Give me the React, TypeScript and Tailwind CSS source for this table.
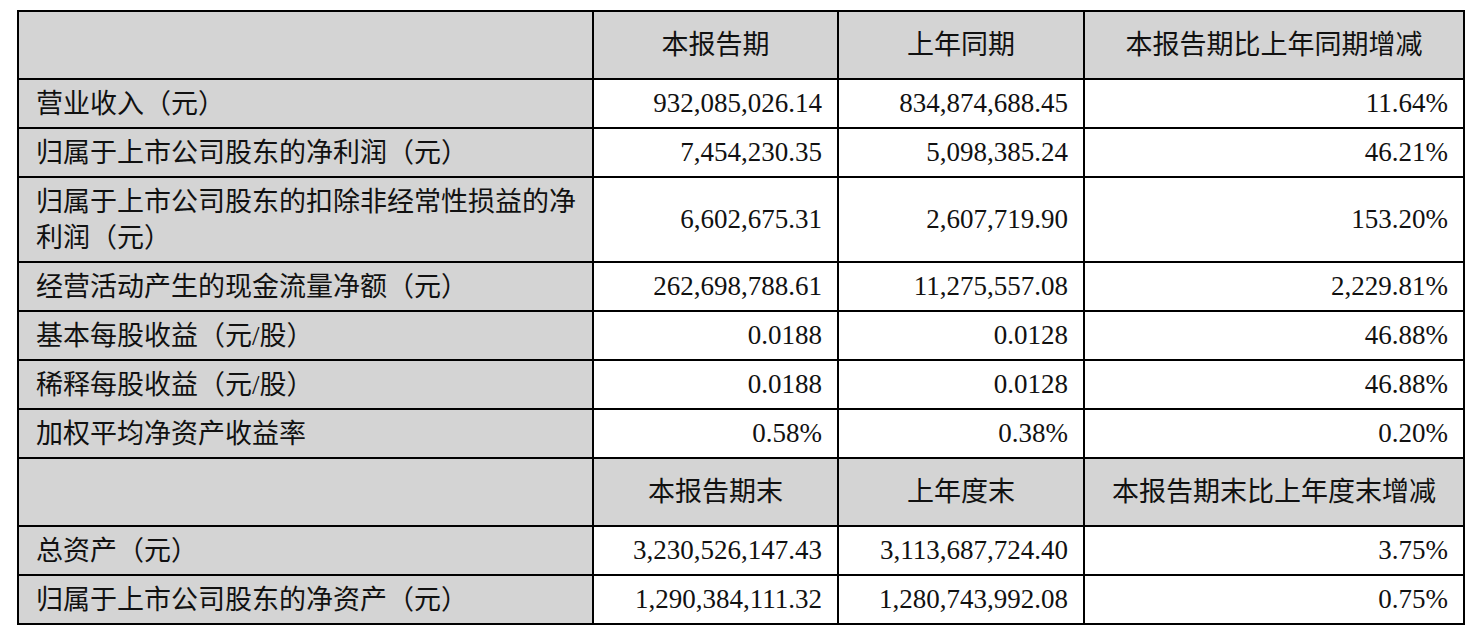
const rows1 = [
  { label: '营业收入（元）', a: '932,085,026.14', b: '834,874,688.45', c: '11.64%' },
  { label: '归属于上市公司股东的净利润（元）', a: '7,454,230.35', b: '5,098,385.24', c: '46.21%' },
  {
    label: '归属于上市公司股东的扣除非经常性损益的净利润（元）',
    a: '6,602,675.31',
    b: '2,607,719.90',
    c: '153.20%',
    tall: true,
  },
  { label: '经营活动产生的现金流量净额（元）', a: '262,698,788.61', b: '11,275,557.08', c: '2,229.81%' },
  { label: '基本每股收益（元/股）', a: '0.0188', b: '0.0128', c: '46.88%' },
  { label: '稀释每股收益（元/股）', a: '0.0188', b: '0.0128', c: '46.88%' },
  { label: '加权平均净资产收益率', a: '0.58%', b: '0.38%', c: '0.20%' },
]

const rows2 = [
  { label: '总资产（元）', a: '3,230,526,147.43', b: '3,113,687,724.40', c: '3.75%' },
  { label: '归属于上市公司股东的净资产（元）', a: '1,290,384,111.32', b: '1,280,743,992.08', c: '0.75%' },
]

function HeaderRow({ cols }: { cols: string[] }) {
  return (
    <tr className="h-[68px] bg-[#d4d4d4]">
      <td className="border-2 border-black"></td>
      {cols.map((c) => (
        <td key={c} className="border-2 border-black text-center align-middle">
          {c}
        </td>
      ))}
    </tr>
  )
}

function DataRow({ row }: { row: { label: string; a: string; b: string; c: string; tall?: boolean } }) {
  return (
    <tr className={row.tall ? 'h-[85px]' : 'h-[49px]'}>
      <td className="border-2 border-black bg-[#d4d4d4] pl-[17px] pr-2 align-middle leading-[36px]">
        {row.tall ? (
          <>
            归属于上市公司股东的扣除非经常性损益的净
            <br />
            利润（元）
          </>
        ) : (
          row.label
        )}
      </td>
      <td className="border-2 border-black pr-[15px] text-right align-middle">{row.a}</td>
      <td className="border-2 border-black pr-[15px] text-right align-middle">{row.b}</td>
      <td className="border-2 border-black pr-[15px] text-right align-middle">{row.c}</td>
    </tr>
  )
}

export default function App() {
  return (
    <div className="min-h-screen bg-white pt-[10px] pl-[17px]">
      <table
        className="table-fixed border-collapse text-[27px] text-[#111] font-['Liberation_Serif','Noto_Sans_CJK_SC',serif] leading-none"
        style={{ width: 1446 }}
      >
        <colgroup>
          <col className="w-[575px]" />
          <col className="w-[245px]" />
          <col className="w-[246px]" />
          <col className="w-[380px]" />
        </colgroup>
        <tbody>
          <HeaderRow cols={['本报告期', '上年同期', '本报告期比上年同期增减']} />
          {rows1.map((r) => (
            <DataRow key={r.label} row={r} />
          ))}
          <HeaderRow cols={['本报告期末', '上年度末', '本报告期末比上年度末增减']} />
          {rows2.map((r) => (
            <DataRow key={r.label} row={r} />
          ))}
        </tbody>
      </table>
    </div>
  )
}
